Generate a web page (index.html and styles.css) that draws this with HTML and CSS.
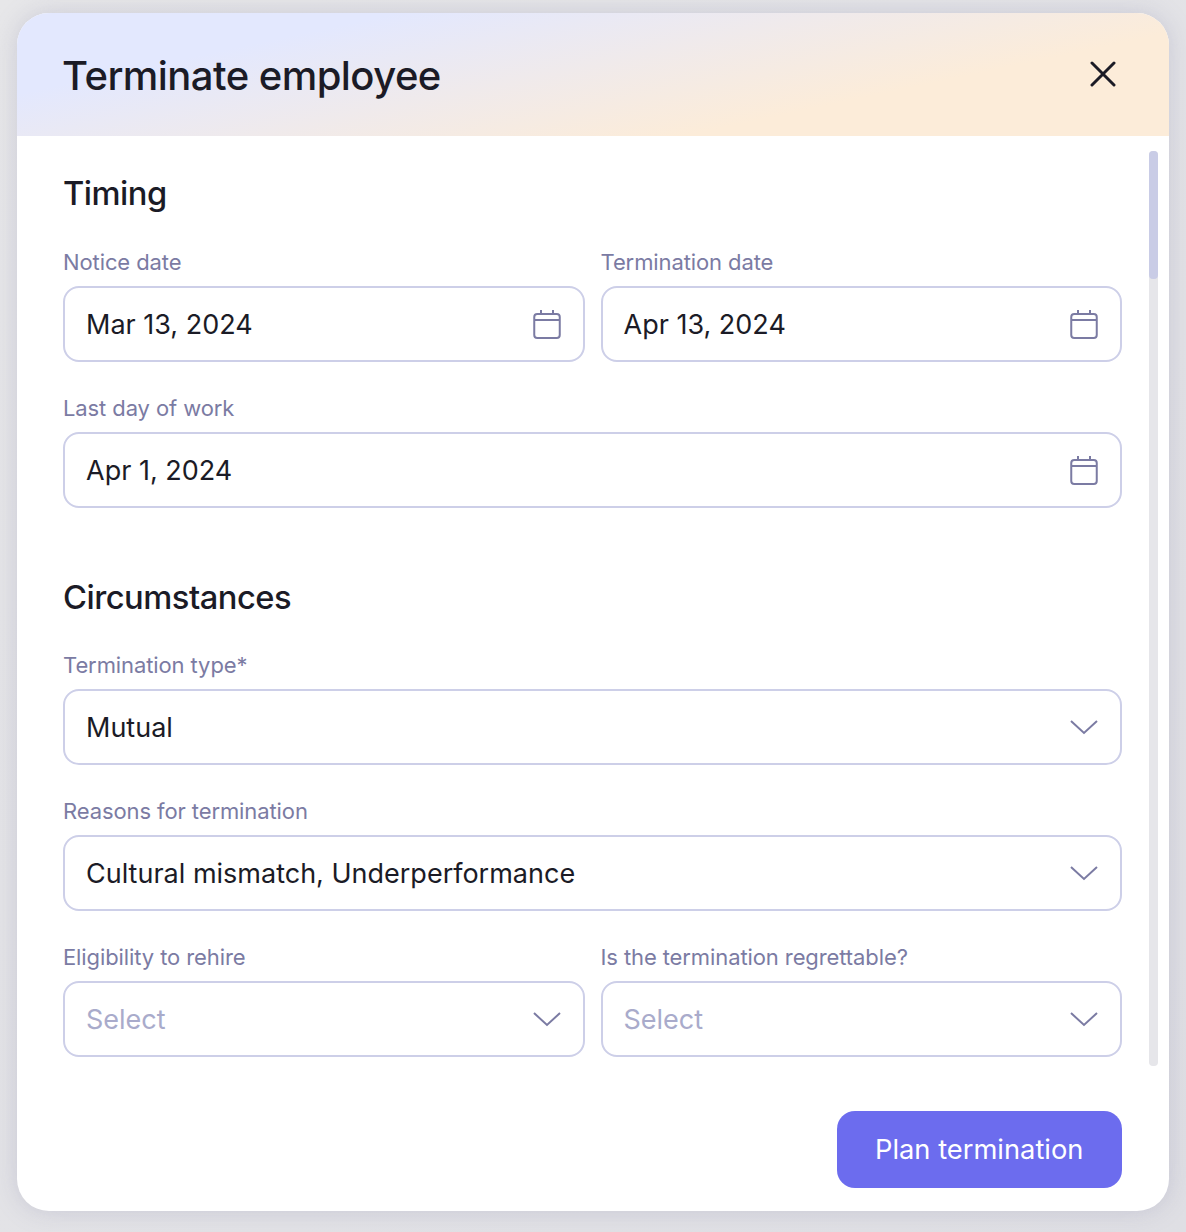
FILE: index.html
```html
<!DOCTYPE html>
<html lang="en">
<head>
<meta charset="utf-8">
<title>Terminate employee</title>
<link rel="stylesheet" href="styles.css">
</head>
<body>
<svg class="defs" width="0" height="0" aria-hidden="true">
  <symbol id="cal" viewBox="0 0 28 30">
    <path d="M8 1v5M20 1v5" fill="none" stroke="currentColor" stroke-width="2"/>
    <rect x="1.25" y="5" width="25.5" height="24" rx="3" fill="none" stroke="currentColor" stroke-width="2"/>
    <path d="M1.25 11h25.5" fill="none" stroke="currentColor" stroke-width="2"/>
  </symbol>
  <symbol id="chev" viewBox="0 0 28 16">
    <path d="M1 2l13 12L27 2" fill="none" stroke="currentColor" stroke-width="2"/>
  </symbol>
</svg>
<main class="modal">
  <header class="modal-head">
    <h1 class="title">Terminate employee</h1>
    <svg class="close" viewBox="0 0 26 26" width="26" height="26"><path d="M2 2l22 22M24 2L2 24" fill="none" stroke="currentColor" stroke-width="3" stroke-linecap="round"/></svg>
  </header>
  <div class="modal-body">
    <div class="scrollbar"><div class="thumb"></div></div>
    <h2 class="section first">Timing</h2>
    <div class="rows">
      <div class="row">
        <div class="field"><div class="label">Notice date</div><div class="input"><span class="value">Mar 13, 2024</span><svg class="icon cal"><use href="#cal"/></svg></div></div>
        <div class="field"><div class="label">Termination date</div><div class="input"><span class="value">Apr 13, 2024</span><svg class="icon cal"><use href="#cal"/></svg></div></div>
      </div>
      <div class="row">
        <div class="field"><div class="label">Last day of work</div><div class="input"><span class="value">Apr 1, 2024</span><svg class="icon cal"><use href="#cal"/></svg></div></div>
      </div>
    </div>
    <h2 class="section">Circumstances</h2>
    <div class="rows">
      <div class="row">
        <div class="field"><div class="label">Termination type*</div><div class="input"><span class="value">Mutual</span><svg class="icon chev"><use href="#chev"/></svg></div></div>
      </div>
      <div class="row">
        <div class="field"><div class="label">Reasons for termination</div><div class="input"><span class="value">Cultural mismatch, Underperformance</span><svg class="icon chev"><use href="#chev"/></svg></div></div>
      </div>
      <div class="row">
        <div class="field"><div class="label">Eligibility to rehire</div><div class="input"><span class="value placeholder">Select</span><svg class="icon chev"><use href="#chev"/></svg></div></div>
        <div class="field"><div class="label">Is the termination regrettable?</div><div class="input"><span class="value placeholder">Select</span><svg class="icon chev"><use href="#chev"/></svg></div></div>
      </div>
    </div>
    <div class="actions"><button class="primary" type="button">Plan termination</button></div>
  </div>
</main>
</body>
</html>
```
FILE: styles.css
```css
* { box-sizing: border-box; }
html, body { margin: 0; height: 1232px; overflow: hidden; }
body {
  background: linear-gradient(135deg, #e7e7e9 0%, #dfdfe4 100%);
  padding: 13px 17px 21px;
  font-family: "Inter", "Liberation Sans", sans-serif;
  color: #1b1b26;
}
.defs { position: absolute; }
.modal {
  height: 1198px;
  background: #fff;
  border-radius: 32px;
  overflow: hidden;
  box-shadow: 0 0 24px rgba(130, 130, 165, 0.28);
  display: flex;
  flex-direction: column;
}
.modal-head {
  height: 122.5px;
  flex: none;
  display: flex;
  align-items: center;
  justify-content: space-between;
  padding: 0 53px 0 45px;
  background: linear-gradient(168deg, #e3e8fe 22%, #fcecd9 72%);
}
.title { margin: 0; font-size: 40px; font-weight: 500; letter-spacing: -0.55px; padding-top: 2px; }
.close { color: #1b1b26; }
.modal-body { position: relative; flex: 1; padding: 0 47px 0 46px; }
.scrollbar {
  position: absolute;
  top: 15px; right: 11px;
  width: 9px; height: 915px;
  background: #e6e6ea;
  border-radius: 4px;
}
.thumb { height: 128px; background: #c9cce6; border-radius: 4px; }
.section { margin: 67px 0 34px; height: 44px; line-height: 44px; font-size: 32.7px; font-weight: 500; letter-spacing: -0.5px; }
.section.first { margin: 35px 0 35px; }
.rows { display: flex; flex-direction: column; gap: 34px; }
.row { display: flex; gap: 16px; }
.field { flex: 1; min-width: 0; }
.label { height: 36px; line-height: 24px; font-size: 22px; letter-spacing: -0.1px; color: #7b7ba3; }
.input {
  height: 76px;
  border: 2px solid #cdcfe8;
  border-radius: 16px;
  display: flex;
  align-items: center;
  justify-content: space-between;
  padding: 0 22px 0 21px;
}
.value { font-size: 27px; color: #1b1b26; padding-top: 2px; }
.placeholder { color: #a9abcb; }
.icon { display: block; color: #7b7ba3; }
.cal { width: 28px; height: 30px; }
.chev { width: 28px; height: 16px; }
.actions { display: flex; justify-content: flex-end; margin-top: 54px; }
.primary {
  width: 285.5px; height: 77px;
  border: 0;
  border-radius: 18px;
  background: #6c6cee;
  color: #fff;
  font-family: inherit;
  font-size: 27.3px;
}
```
